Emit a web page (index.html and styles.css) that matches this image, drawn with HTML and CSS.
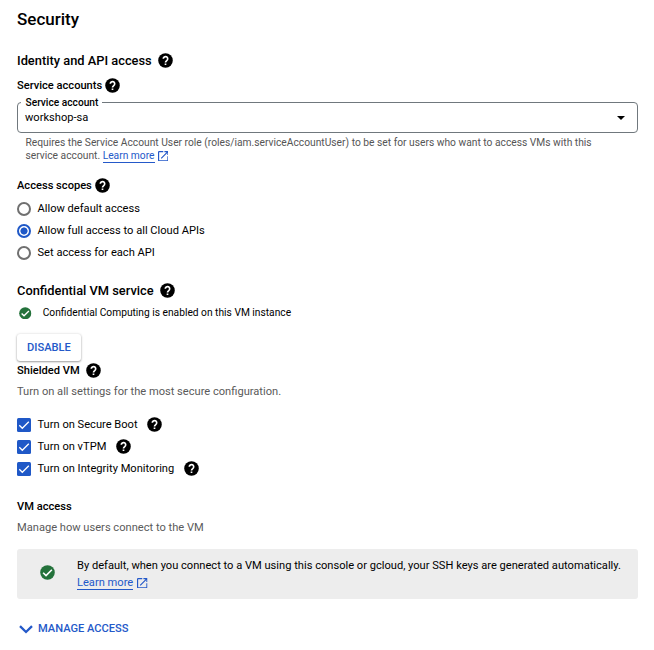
FILE: index.html
```html
<!DOCTYPE html>
<html lang="en">
<head>
<meta charset="utf-8">
<title>Security</title>
<link rel="stylesheet" href="styles.css">
</head>
<body>
<svg class="symbols" aria-hidden="true">
  <symbol id="help" viewBox="1.700 1.700 20.600 20.600"><circle cx="12" cy="12" r="10"/><path d="M9 9.700a3 3 0 1 1 4.700 2.400C12.500 13 12 13.400 12 14.700M12 16.100v2.100" fill="none" stroke="#fff" stroke-width="2.300"/></symbol>
  <symbol id="done" viewBox="1.700 1.700 20.600 20.600"><circle cx="12" cy="12" r="10"/><path d="M6 12.300 10 16.200 18 8.200" fill="none" stroke="#fff" stroke-width="2.200"/></symbol>
  <symbol id="open" viewBox="3 3 18 18"><path d="M19 19H5V5h7V3H5a2 2 0 0 0-2 2v14a2 2 0 0 0 2 2h14c1.100 0 2-.9 2-2v-7h-2v7zM14 3v2h3.590l-9.830 9.830 1.410 1.410L19 6.410V10h2V3h-7z"/></symbol>
  <symbol id="tick" viewBox="0 0 14 14"><path d="M2.300 7.300 5.300 10.300 11.800 3.800" fill="none" stroke="#fff" stroke-width="1.300"/></symbol>
</svg>
<main class="page">
  <h1 class="title">Security</h1>

  <h2 class="section section-identity">Identity and API access <svg class="help"><use href="#help"/></svg></h2>
  <h3 class="subhead accounts">Service accounts <svg class="help"><use href="#help"/></svg></h3>
  <fieldset class="field">
    <legend class="field-label">Service account</legend>
    <div class="field-value"><span>workshop-sa</span><i class="caret"></i></div>
  </fieldset>
  <p class="hint">Requires the Service Account User role (roles/iam.serviceAccountUser) to be set for users who want to access VMs with this<br>service account. <a class="link">Learn more</a><svg class="open"><use href="#open"/></svg></p>

  <h3 class="subhead scopes">Access scopes <svg class="help"><use href="#help"/></svg></h3>
  <div class="options">
    <label class="option"><span class="radio"></span>Allow default access</label>
    <label class="option"><span class="radio selected"></span>Allow full access to all Cloud APIs</label>
    <label class="option"><span class="radio"></span>Set access for each API</label>
  </div>

  <h2 class="section confidential">Confidential VM service <svg class="help"><use href="#help"/></svg></h2>
  <div class="status"><svg class="done"><use href="#done"/></svg><span>Confidential Computing is enabled on this VM instance</span></div>
  <button class="disable">DISABLE</button>

  <h3 class="subhead shielded">Shielded VM <svg class="help"><use href="#help"/></svg></h3>
  <p class="desc">Turn on all settings for the most secure configuration.</p>
  <div class="options checks">
    <label class="option"><svg class="check"><use href="#tick"/></svg>Turn on Secure Boot <svg class="help"><use href="#help"/></svg></label>
    <label class="option"><svg class="check"><use href="#tick"/></svg>Turn on vTPM <svg class="help"><use href="#help"/></svg></label>
    <label class="option"><svg class="check"><use href="#tick"/></svg>Turn on Integrity Monitoring <svg class="help"><use href="#help"/></svg></label>
  </div>

  <h3 class="subhead access">VM access</h3>
  <p class="desc">Manage how users connect to the VM</p>
  <div class="banner">
    <svg class="done"><use href="#done"/></svg>
    <p class="banner-text">By default, when you connect to a VM using this console or gcloud, your SSH keys are generated automatically.<br><a class="link">Learn more</a><svg class="open"><use href="#open"/></svg></p>
  </div>
  <a class="manage"><svg class="chevron" viewBox="0 0 14 9"><path d="M1 1.200 7 7 13 1.200"/></svg>MANAGE ACCESS</a>
</main>
</body>
</html>
```
FILE: styles.css
```css
* { box-sizing: border-box; }
body { margin: 0; background: #fff; color: #000; font: 11.110px/16px Roboto, sans-serif; }
h1, h2, h3, p { margin: 0; }
.symbols { display: none; }
.page { display: flex; flex-direction: column; width: 638px; padding: 8px 0 0 17px; white-space: nowrap; }
.title { font-size: 17px; line-height: 22px; font-weight: 500; }
.section { display: flex; align-items: center; gap: 6px; height: 20px; font-size: 12.850px; font-weight: 500; }
.section-identity { margin-top: 20.600px; }
.help { flex: none; width: 15px; height: 15px; margin-bottom: 1px; fill: #000; }
.subhead { display: flex; align-items: center; gap: 3px; height: 16px; font-size: 11.110px; font-weight: 500; }
.accounts { margin-top: 7px; }
.field { height: 37px; margin: 2.400px 0 0; padding: 0 12px 0 3px; border: 1px solid #70787d; border-radius: 4px; }
.field-label { height: 13px; padding: 0 4px 0 4.500px; line-height: 13px; font-size: 10.200px; font-weight: 500; }
.field-value { display: flex; align-items: center; justify-content: space-between; height: 18px; padding-left: 4px; }
.caret { border: 4.500px solid transparent; border-top-color: #000; border-bottom: 0; }
.hint { margin-top: 3.300px; padding-left: 8.500px; color: #555; font-size: 10.260px; line-height: 13px; }
.link { color: #2459c9; border-bottom: 1px solid #2459c9; }
.open { width: 10.500px; height: 10.500px; margin-left: 4px; vertical-align: -2px; fill: #2459c9; }
.hint .open { margin-left: 3px; }
.scopes { margin-top: 15.300px; }
.options { display: flex; flex-direction: column; margin-top: 4px; }
.option { display: flex; align-items: center; height: 22.200px; }
.radio { width: 14px; height: 14px; margin-right: 6.500px; border: 2px solid #707070; border-radius: 50%; }
.radio.selected { border-color: #1f58c7; background: radial-gradient(circle, #1f58c7 3.200px, #fff 3.900px); }
.confidential { margin-top: 16.900px; }
.status { display: flex; align-items: center; height: 16px; margin-top: 4px; padding-left: 2px; font-size: 10.230px; }
.done { flex: none; width: 12.500px; height: 12.500px; fill: #24723b; }
.status .done { margin-right: 11.200px; }
.disable { align-self: flex-start; width: 64px; height: 27px; margin-top: 12.700px; padding: 0; border: 0; border-radius: 3px; background: #fff; color: #2459c9; font: 500 11.110px/27px Roboto, sans-serif; box-shadow: 0 1px 2px rgba(0,0,0,.34), 0 0 3px rgba(0,0,0,.12); }
.shielded { margin-top: 2px; gap: 6px; }
.desc { margin-top: 5px; color: #5a5a5a; }
.checks { margin-top: 13.700px; }
.check { width: 14px; height: 14px; margin-right: 6.500px; border-radius: 1.500px; background: #1f58c7; }
.option .help { margin-left: 9.500px; }
.access { margin-top: 19px; }
.banner { display: flex; align-items: center; height: 50px; margin-top: 13.500px; padding-left: 23px; border-radius: 3px; background: #ededed; }
.banner .done { width: 15px; height: 15px; margin: -3px 22px 0 0; }
.banner-text { line-height: 17px; }
.manage { display: flex; align-items: center; gap: 5px; height: 16px; margin-top: 22px; padding-left: 2px; color: #2459c9; font-weight: 500; }
.chevron { width: 14px; height: 9px; fill: none; stroke: #2459c9; stroke-width: 2.300; }
```
